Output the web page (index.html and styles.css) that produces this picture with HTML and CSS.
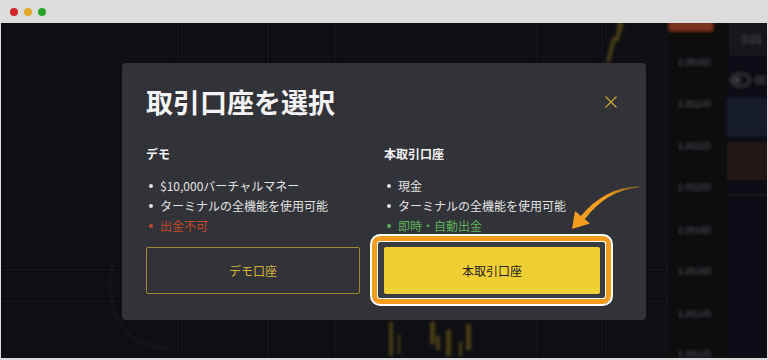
FILE: index.html
```html
<!DOCTYPE html>
<html lang="ja">
<head>
<meta charset="utf-8">
<title>取引口座を選択</title>
<link rel="stylesheet" href="styles.css">
</head>
<body>
<div class="window">
  <div class="titlebar">
    <span class="dot dot-red"></span>
    <span class="dot dot-yellow"></span>
    <span class="dot dot-green"></span>
  </div>
  <div class="content">
    <svg class="chart" width="766" height="335" viewBox="1 23 766 335" xmlns="http://www.w3.org/2000/svg">
      <defs>
        <filter id="blur" x="-5%" y="-5%" width="110%" height="110%"><feGaussianBlur stdDeviation="1.5"/></filter>
      </defs>
      <rect x="1" y="23" width="766" height="335" fill="#0e0f14"/>
      <g filter="url(#blur)">
        <path d="M178 23V358M268 23V358M335 23V358M537 23V358M602 23V358" stroke="#15161c" stroke-width="1.5"/>
        <path d="M1 270H667M1 301H667" stroke="#14151b" stroke-width="1.5"/>
        <path d="M112 262C104 318 128 346 168 349" stroke="#17181e" stroke-width="2" fill="none"/>
        <rect x="667" y="23" width="59" height="335" fill="#0c0d11"/>
        <path d="M667 23V358" stroke="#17181e" stroke-width="1.5"/>
        <rect x="669" y="16" width="44" height="15" rx="2" fill="#7a321d"/>
        <g class="axis-text">
          <text x="678" y="65">1.05260</text>
          <text x="678" y="107">1.05240</text>
          <text x="678" y="149">1.05220</text>
          <text x="678" y="190">1.05200</text>
          <text x="678" y="233">1.05180</text>
          <text x="678" y="274">1.05160</text>
          <text x="678" y="317">1.05140</text>
          <text x="678" y="357">1.05120</text>
        </g>
        <rect x="726" y="23" width="42" height="335" fill="#0f1014"/>
        <rect x="729" y="20" width="42" height="36" rx="3" fill="#18191e"/>
        <text class="panel-text" x="742" y="43">0.01</text>
        <rect x="731.5" y="74.5" width="18" height="11" rx="5.5" fill="none" stroke="#3c3e44" stroke-width="1.5"/>
        <circle cx="737" cy="80" r="3" fill="#3c3e44"/>
        <text class="panel-text" x="755" y="84">00</text>
        <rect x="727" y="98" width="44" height="38" rx="2" fill="#121c2c"/>
        <rect x="727" y="142" width="44" height="38" rx="2" fill="#221714"/>
        <path d="M728 195H768" stroke="#1a1b20" stroke-width="1.5"/>
        <g fill="#6e5c1a" opacity="0.6">
          <path d="M618 22L624 22L619 40L615 42L612 54L610 62L606 62L609 50L612 38L616 36Z"/>
          <rect x="389" y="322" width="4" height="34"/>
          <rect x="398" y="334" width="2" height="20"/>
          <rect x="430" y="322" width="5" height="22"/>
          <rect x="436" y="336" width="4" height="14"/>
          <rect x="446" y="330" width="5" height="26"/>
          <rect x="459" y="342" width="3" height="14"/>
          <rect x="466" y="324" width="5" height="26"/>
        </g>
      </g>
    </svg>

    <div class="modal">
      <div class="modal-head">
        <h1 class="modal-title">取引口座を選択</h1>
        <svg class="close" width="12" height="12" viewBox="0 0 12 12" xmlns="http://www.w3.org/2000/svg">
          <path d="M0.5 0.5L11.5 11.5M11.5 0.5L0.5 11.5" stroke="#c9a62e" stroke-width="1.2"/>
        </svg>
      </div>
      <div class="cols">
        <div class="col">
          <h2 class="col-title">デモ</h2>
          <ul class="features">
            <li>$10,000バーチャルマネー</li>
            <li>ターミナルの全機能を使用可能</li>
            <li class="neg">出金不可</li>
          </ul>
          <button class="btn btn-outline" type="button">デモ口座</button>
        </div>
        <div class="col">
          <h2 class="col-title">本取引口座</h2>
          <ul class="features">
            <li>現金</li>
            <li>ターミナルの全機能を使用可能</li>
            <li class="pos">即時・自動出金</li>
          </ul>
          <div class="btn-wrap">
            <span class="highlight"></span>
            <button class="btn btn-fill" type="button">本取引口座</button>
          </div>
        </div>
      </div>
      <svg class="arrow" width="85" height="60" viewBox="0 0 85 60" xmlns="http://www.w3.org/2000/svg">
        <defs>
          <linearGradient id="ag" x1="80" y1="6" x2="20" y2="40" gradientUnits="userSpaceOnUse">
            <stop offset="0" stop-color="#f39c1e" stop-opacity="0.35"/>
            <stop offset="0.5" stop-color="#f39c1e"/>
            <stop offset="1" stop-color="#f39c1e"/>
          </linearGradient>
        </defs>
        <path d="M79 6.3Q45 7 20.5 36.5L24.5 39.5Q47 10 79 7.6Z" fill="url(#ag)"/>
        <path d="M12 49L15 31L30 43.5Z" fill="#f39c1e"/>
      </svg>
    </div>
  </div>
</div>
</body>
</html>
```

FILE: styles.css
```css
html, body {
  margin: 0;
  padding: 0;
}

body {
  width: 768px;
  height: 360px;
  background: #dcdcdc;
  font-family: "Noto Sans CJK JP", "Noto Sans", sans-serif;
  overflow: hidden;
}

.window {
  width: 768px;
  height: 360px;
}

.titlebar {
  height: 23px;
  display: flex;
  align-items: center;
  gap: 6px;
  padding: 1px 0 0 10px;
  box-sizing: border-box;
}

.dot {
  width: 8px;
  height: 8px;
  border-radius: 50%;
}

.dot-red { background: #d0282a; }
.dot-yellow { background: #e0a92a; }
.dot-green { background: #26a628; }

.content {
  position: relative;
  width: 766px;
  height: 335px;
  margin: 0 1px;
  overflow: hidden;
  background: #0e0f14;
}

.chart {
  display: block;
}

.axis-text text {
  font-family: "Liberation Sans", sans-serif;
  font-size: 9px;
  fill: #43464d;
}

.panel-text {
  font-family: "Liberation Sans", sans-serif;
  font-size: 10px;
  fill: #4c4f56;
}

.modal {
  position: absolute;
  z-index: 1;
  left: 121px;
  top: 40px;
  width: 524px;
  height: 257px;
  box-sizing: border-box;
  padding: 23px 24px 26px;
  background: #323338;
  border-radius: 4px;
  color: #e6e6e6;
}

.modal-head {
  display: flex;
  align-items: center;
  justify-content: space-between;
  height: 32px;
}

.modal-title {
  margin: 0;
  font-size: 27px;
  line-height: 32px;
  font-weight: 700;
  color: #f4f4f4;
}

.close {
  margin-right: 5px;
  display: block;
}

.cols {
  display: grid;
  grid-template-columns: 214px 216px;
  column-gap: 24px;
  margin-top: 26px;
}

.col {
  display: flex;
  flex-direction: column;
}

.col-title {
  margin: 0;
  font-size: 12px;
  line-height: 20px;
  font-weight: 700;
  color: #f4f4f4;
}

.features {
  list-style: none;
  margin: 12px 0 0;
  padding: 0;
  font-size: 12px;
  line-height: 20px;
  color: #e2e2e2;
}

.features li {
  position: relative;
  padding-left: 14px;
}

.features li::before {
  content: "";
  position: absolute;
  left: 3px;
  top: 8px;
  width: 4px;
  height: 4px;
  border-radius: 50%;
  background: currentColor;
}

.features .neg { color: #c6472c; }
.features .pos { color: #5cb15a; }

.btn {
  margin: 11px 0 0;
  height: 47px;
  width: 100%;
  border-radius: 2px;
  font-family: inherit;
  font-size: 12px;
  cursor: pointer;
  padding: 0;
}

.btn-outline {
  background: transparent;
  border: 1px solid #a08b2c;
  color: #d2b13a;
}

.btn-wrap {
  position: relative;
  margin-top: 11px;
}

.btn-wrap .btn {
  margin: 0;
  display: block;
}

.btn-fill {
  background: #f0cf35;
  border: none;
  color: #1e1e1e;
}

.highlight {
  position: absolute;
  z-index: -1;
  top: -13px;
  left: -14px;
  right: -13px;
  bottom: -12px;
  border: 2px solid #ffffff;
  border-radius: 10px;
  background: #3b3c41;
  box-shadow: inset 0 0 0 5px #f39c1e, inset 0 0 0 6px #ffffff;
}

.arrow {
  position: absolute;
  left: 438px;
  top: 117px;
  display: block;
}
```
